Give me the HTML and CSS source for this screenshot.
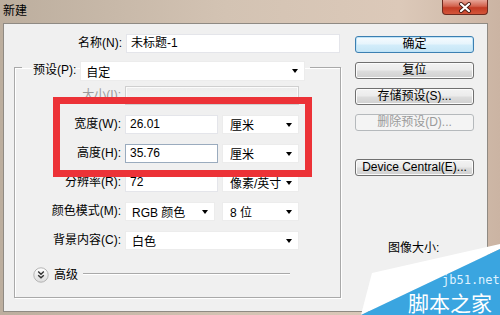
FILE: index.html
```html
<!DOCTYPE html>
<html lang="zh-CN">
<head>
<meta charset="UTF-8">
<meta name="viewport" content="width=device-width, initial-scale=1.0">
<title>新建</title>
<link rel="stylesheet" href="styles.css">
</head>
<body>
<div class="window">
    <div class="titlebar">
        <span class="title">新建</span>
        <div class="close">
            <svg width="14" height="11" viewBox="0 0 14 11">
                <path d="M3 2 L11 9 M11 2 L3 9" stroke="#4a1c14" stroke-width="4" stroke-linecap="round"/>
                <path d="M3 2 L11 9 M11 2 L3 9" stroke="#fff" stroke-width="2.2" stroke-linecap="round"/>
            </svg>
        </div>
    </div>

    <div class="client">
        <div class="left">
            <div class="row">
                <span class="lbl name-lbl">名称(N):</span>
                <div class="field name-field">未标题-1</div>
            </div>

            <fieldset class="group">
                <legend class="preset">
                    <span class="preset-lbl">预设(P):</span>
                    <div class="drop preset-drop">自定<span class="arrow"></span></div>
                </legend>

                <div class="rows">
                    <div class="row">
                        <span class="lbl off-lbl">大小(I):</span>
                        <div class="field off-field"></div>
                    </div>
                    <div class="row">
                        <span class="lbl">宽度(W):</span>
                        <div class="field num">26.01</div>
                        <div class="drop unit">厘米<span class="arrow"></span></div>
                    </div>
                    <div class="row">
                        <span class="lbl">高度(H):</span>
                        <div class="field num focus">35.76</div>
                        <div class="drop unit">厘米<span class="arrow"></span></div>
                    </div>
                    <div class="row">
                        <span class="lbl">分辨率(R):</span>
                        <div class="field num">72</div>
                        <div class="drop unit">像素/英寸<span class="arrow"></span></div>
                    </div>
                    <div class="row">
                        <span class="lbl">颜色模式(M):</span>
                        <div class="drop mode">RGB 颜色<span class="arrow"></span></div>
                        <div class="drop unit">8 位<span class="arrow"></span></div>
                    </div>
                    <div class="row">
                        <span class="lbl">背景内容(C):</span>
                        <div class="drop bg">白色<span class="arrow"></span></div>
                    </div>
                </div>

                <div class="advanced">
                    <svg width="16" height="16" viewBox="0 0 16 16">
                        <defs>
                            <linearGradient id="knob" x1="0" y1="0" x2="0" y2="1">
                                <stop offset="0" stop-color="#ffffff"/>
                                <stop offset="1" stop-color="#dcdcdc"/>
                            </linearGradient>
                        </defs>
                        <circle cx="8" cy="8" r="7.2" fill="url(#knob)" stroke="#b4b4b4"/>
                        <path d="M5.2 4.6 L8 7.2 L10.8 4.6 M5.2 8.2 L8 10.8 L10.8 8.2" fill="none" stroke="#333" stroke-width="1.4"/>
                    </svg>
                    <span class="adv-text">高级</span>
                    <span class="rule"></span>
                </div>
            </fieldset>
        </div>

        <div class="right">
            <div class="btn default">确定</div>
            <div class="btn">复位</div>
            <div class="btn">存储预设(S)...</div>
            <div class="btn disabled">删除预设(D)...</div>
            <div class="btn device">Device Central(E)...</div>
            <div class="size-info">图像大小:</div>
        </div>
    </div>

    <div class="mark"></div>

    <div class="watermark">
        <svg width="140" height="72" viewBox="0 0 140 72">
            <polygon points="1,72 12,30 140,1 140,6" fill="#ffffff"/>
            <polygon points="1,72 140,6 140,72" fill="#3aa5e0"/>
        </svg>
        <span class="wm-url">jb51.net</span>
        <span class="wm-name">脚本之家</span>
    </div>
</div>
</body>
</html>
```

FILE: styles.css
```css
* {
    box-sizing: border-box;
}

body {
    margin: 0;
    font-family: "Liberation Sans", "Noto Sans CJK SC", sans-serif;
    font-size: 12px;
    color: #000;
}

.window {
    position: relative;
    width: 500px;
    height: 315px;
    overflow: hidden;
    display: flex;
    flex-direction: column;
    background: linear-gradient(90deg, #bcae9e, #d3c3b3 45%, #dcc9b9 80%, #cbb4a3);
}

.titlebar {
    height: 23px;
    display: flex;
    align-items: flex-start;
    flex-shrink: 0;
}

.title {
    padding: 4px 0 0 3px;
    line-height: 14px;
}

.close {
    margin-left: auto;
    margin-right: 12px;
    width: 46px;
    height: 15px;
    border: 1px solid #6d2a1f;
    border-top: none;
    border-radius: 0 0 4px 4px;
    background: linear-gradient(#e7a597, #d2614c 45%, #c23b24 55%, #d4553a);
    display: flex;
    align-items: center;
    justify-content: center;
}

.client {
    flex: 1;
    margin: 0 12px 3px 3px;
    border: 1px solid #8f8a83;
    background: #f0f0f0;
    display: flex;
    padding: 10px 13px 0 10px;
}

.left {
    width: 327px;
}

.row {
    display: flex;
    height: 19px;
    gap: 4px;
    align-items: stretch;
}

.lbl {
    width: 106px;
    text-align: right;
    line-height: 19px;
    white-space: nowrap;
}

.name-lbl {
    width: 108px;
}

.field {
    background: #fff;
    border: 1px solid #e4e5ea;
    padding: 0 4px;
    line-height: 17px;
}

.name-field {
    width: 214px;
}

.num {
    width: 93px;
}

.focus {
    border-color: #9aabbe;
}

.off-lbl {
    color: #9a9a9a;
}

.off-field {
    width: 174px;
    background: linear-gradient(#ececec, #f6f6f6);
    border-color: #cfcfcf;
    box-shadow: inset 0 0 0 1px #fbfbfb;
}

.drop {
    display: flex;
    align-items: center;
    background: #fff;
    border: 1px solid #ececec;
    padding: 0 6px 0 6px;
    white-space: nowrap;
}

.arrow {
    margin-left: auto;
    width: 0;
    height: 0;
    border-left: 3.5px solid transparent;
    border-right: 3.5px solid transparent;
    border-top: 4px solid #000;
}

.unit {
    width: 77px;
    margin-left: 0;
    padding-left: 7px;
}

.mode {
    width: 90px;
    margin-right: 3px;
}

.bg {
    width: 174px;
}

.group {
    margin: 0;
    padding: 0 0 14px 0;
    width: 327px;
    border: 1px solid #a9a9a9;
    box-shadow: 1px 1px 0 #fff, inset 1px 1px 0 #fff;
}

.preset {
    margin-left: 7px;
    padding: 8px 5px 0 11px;
    display: flex;
    align-items: stretch;
    gap: 4px;
    height: 28px;
}

.preset-lbl {
    line-height: 19px;
}

.preset-drop {
    width: 225px;
    height: 20px;
    padding-left: 5px;
}

.rows {
    display: flex;
    flex-direction: column;
    gap: 10px;
    padding-top: 5px;
}

.advanced {
    display: flex;
    align-items: center;
    margin: 17px 0 0 18px;
    height: 16px;
}

.adv-text {
    margin-left: 5px;
    line-height: 14px;
}

.rule {
    width: 207px;
    height: 2px;
    margin: 0 0 3px 5px;
    border-top: 1px solid #a9a9a9;
    border-bottom: 1px solid #fff;
}

.right {
    width: 119px;
    margin-left: 14px;
    padding-top: 2px;
    display: flex;
    flex-direction: column;
}

.btn {
    height: 17px;
    margin-bottom: 9px;
    border: 1px solid #707070;
    border-radius: 3px;
    background: linear-gradient(#f3f3f3, #ebebeb 48%, #dddddd 52%, #d0d0d0);
    box-shadow: inset 0 0 0 1px #fcfcfc;
    text-align: center;
    line-height: 15px;
    white-space: nowrap;
}

.default {
    border-color: #3c7fb1;
    background: linear-gradient(#f6fbfe, #e6f4fc 48%, #d3edfa 52%, #c5e5f6);
    box-shadow: inset 0 0 0 1px #bfe3f7;
}

.disabled {
    border-color: #b5b9bc;
    background: #f4f4f4;
    box-shadow: none;
    color: #9a9a9a;
}

.device {
    margin-top: 19px;
}

.size-info {
    margin-top: 56px;
    padding-left: 33px;
    line-height: 14px;
}

.mark {
    position: absolute;
    left: 53px;
    top: 97px;
    width: 259px;
    height: 80px;
    border: 7px solid #ec3237;
}

.watermark {
    position: absolute;
    left: 360px;
    top: 243px;
    width: 140px;
    height: 72px;
}

.watermark svg {
    display: block;
}

.wm-url {
    position: absolute;
    left: 82px;
    top: 31px;
    font-family: "DejaVu Sans Mono", monospace;
    font-size: 12px;
    color: #dff2ff;
    line-height: 12px;
}

.wm-name {
    position: absolute;
    left: 48px;
    top: 49px;
    font-family: "Noto Sans CJK SC", sans-serif;
    font-size: 21px;
    line-height: 21px;
    color: #fff;
}
```
